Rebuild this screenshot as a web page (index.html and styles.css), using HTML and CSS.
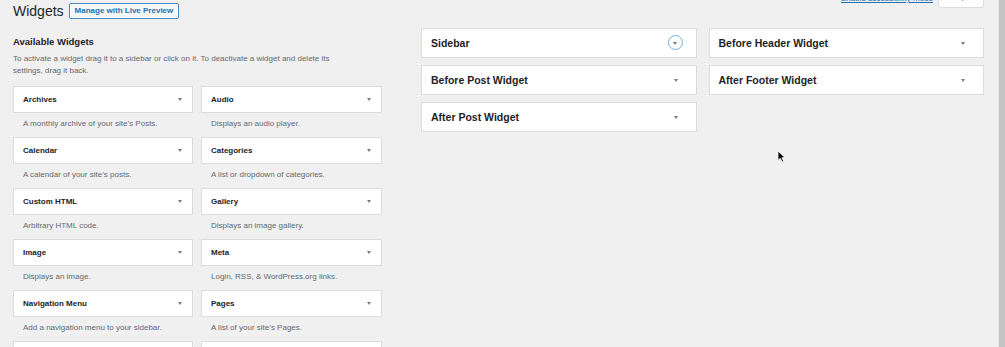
FILE: index.html
```html
<!DOCTYPE html>
<html lang="en">
<head>
    <meta charset="UTF-8" />
    <title>Widgets</title>
    <link rel="stylesheet" href="styles.css">
</head>
<body>

<div class="page">
    <div class="main">
        <div class="top">
            <div class="title-row">
                <h1>Widgets</h1>
                <a class="live-preview" href="#">Manage with Live Preview</a>
            </div>
            <div class="screen-meta">
                <a class="a11y-link" href="#">Enable accessibility mode</a>
                <button class="help-btn">Help ▾</button>
            </div>
        </div>

        <div class="columns">
            <div class="available">
                <h2>Available Widgets</h2>
                <p class="intro">To activate a widget drag it to a sidebar or click on it. To deactivate a widget and delete its settings, drag it back.</p>

                <div class="widget-list">
                    <div class="widget-item">
                        <div class="widget-top"><span>Archives</span><i class="arrow"></i></div>
                        <div class="widget-desc">A monthly archive of your site’s Posts.</div>
                    </div>
                    <div class="widget-item">
                        <div class="widget-top"><span>Audio</span><i class="arrow"></i></div>
                        <div class="widget-desc">Displays an audio player.</div>
                    </div>
                    <div class="widget-item">
                        <div class="widget-top"><span>Calendar</span><i class="arrow"></i></div>
                        <div class="widget-desc">A calendar of your site’s posts.</div>
                    </div>
                    <div class="widget-item">
                        <div class="widget-top"><span>Categories</span><i class="arrow"></i></div>
                        <div class="widget-desc">A list or dropdown of categories.</div>
                    </div>
                    <div class="widget-item">
                        <div class="widget-top"><span>Custom HTML</span><i class="arrow"></i></div>
                        <div class="widget-desc">Arbitrary HTML code.</div>
                    </div>
                    <div class="widget-item">
                        <div class="widget-top"><span>Gallery</span><i class="arrow"></i></div>
                        <div class="widget-desc">Displays an image gallery.</div>
                    </div>
                    <div class="widget-item">
                        <div class="widget-top"><span>Image</span><i class="arrow"></i></div>
                        <div class="widget-desc">Displays an image.</div>
                    </div>
                    <div class="widget-item">
                        <div class="widget-top"><span>Meta</span><i class="arrow"></i></div>
                        <div class="widget-desc">Login, RSS, &amp; WordPress.org links.</div>
                    </div>
                    <div class="widget-item">
                        <div class="widget-top"><span>Navigation Menu</span><i class="arrow"></i></div>
                        <div class="widget-desc">Add a navigation menu to your sidebar.</div>
                    </div>
                    <div class="widget-item">
                        <div class="widget-top"><span>Pages</span><i class="arrow"></i></div>
                        <div class="widget-desc">A list of your site’s Pages.</div>
                    </div>
                    <div class="widget-item">
                        <div class="widget-top empty"></div>
                    </div>
                    <div class="widget-item">
                        <div class="widget-top empty"></div>
                    </div>
                </div>
            </div>

            <div class="sidebars">
                <div class="sidebar-box"><span>Sidebar</span><i class="arrow focus"></i></div>
                <div class="sidebar-box"><span>Before Header Widget</span><i class="arrow"></i></div>
                <div class="sidebar-box"><span>Before Post Widget</span><i class="arrow"></i></div>
                <div class="sidebar-box"><span>After Footer Widget</span><i class="arrow"></i></div>
                <div class="sidebar-box"><span>After Post Widget</span><i class="arrow"></i></div>
            </div>
        </div>
    </div>

    <div class="scrollbar"></div>

    <!-- mouse pointer -->
    <svg class="cursor" width="9" height="13" viewBox="0 0 9 13">
        <path d="M1 1 L1 10.5 L3.3 8.3 L5 12 L6.6 11.3 L4.9 7.7 L8 7.7 Z" fill="#000" stroke="#fff" stroke-width="0.8"/>
    </svg>
</div>

</body>
</html>
```

FILE: styles.css
```css
body {
    margin: 0;
    font-family: 'Liberation Sans', Arial, sans-serif;
    background: #f0f0f1;
    color: #1d2327;
    overflow: hidden;
}

.page {
    position: relative;
    display: flex;
    height: 347px;
    overflow: hidden;
}

.main {
    flex: 1;
    padding: 0 14px 0 13px;
}

.top {
    display: flex;
    justify-content: space-between;
    align-items: flex-start;
    height: 22px;
}

.title-row {
    display: flex;
    align-items: center;
    height: 22px;
}

h1 {
    margin: 0;
    font-size: 14px;
    font-weight: 400;
    line-height: 22px;
}

.live-preview {
    margin-left: 5px;
    padding: 0 5px;
    height: 14px;
    line-height: 14px;
    font-size: 8px;
    font-weight: bold;
    color: #2271b1;
    text-decoration: none;
    border: 1px solid #4a8bc6;
    border-radius: 2px;
    background: #f6f7f7;
}

.screen-meta {
    display: flex;
    align-items: flex-end;
    margin-top: -14px;
}

.a11y-link {
    font-size: 8px;
    line-height: 10px;
    color: #2271b1;
    margin-right: 5px;
    margin-bottom: 4px;
}

.help-btn {
    width: 46px;
    height: 22px;
    padding: 0 0 2px;
    font-family: inherit;
    font-size: 8px;
    color: #646970;
    background: #fff;
    border: 1px solid #dcdcde;
    border-radius: 0 0 3px 3px;
}

.columns {
    display: flex;
    gap: 39px;
}

.available {
    width: 369px;
}

h2 {
    margin: 14px 0 0;
    font-size: 9.5px;
    line-height: 12px;
    font-weight: bold;
}

.intro {
    margin: 5px 0 0;
    max-width: 340px;
    font-size: 8px;
    line-height: 12px;
    color: #646970;
}

.widget-list {
    display: grid;
    grid-template-columns: 180px 181px;
    column-gap: 8px;
    margin-top: 9px;
}

.widget-top {
    display: flex;
    align-items: center;
    justify-content: space-between;
    height: 25px;
    padding: 0 10px 0 9px;
    background: #fff;
    border: 1px solid #dcdcde;
    font-size: 8px;
    font-weight: bold;
}

.widget-desc {
    height: 12px;
    padding: 5px 10px 7px;
    font-size: 8px;
    line-height: 12px;
    color: #646970;
}

.arrow {
    display: inline-block;
    width: 0;
    height: 0;
    border-left: 2.5px solid transparent;
    border-right: 2.5px solid transparent;
    border-top: 3px solid #787c82;
}

.sidebars {
    flex: 1;
    display: grid;
    grid-template-columns: 1fr 1fr;
    gap: 7px 12px;
    margin-top: 6px;
    align-content: start;
}

.sidebar-box {
    display: flex;
    align-items: center;
    justify-content: space-between;
    height: 28px;
    padding: 0 17px 0 9px;
    background: #fff;
    border: 1px solid #dcdcde;
    font-size: 10.5px;
    font-weight: bold;
}

.sidebar-box .arrow {
    margin-right: 1px;
}

.sidebar-box .arrow.focus {
    position: relative;
    margin-right: 2px;
}

.sidebar-box .arrow.focus::after {
    content: '';
    position: absolute;
    left: -6.5px;
    top: -9.5px;
    width: 13px;
    height: 13px;
    border: 1px solid #72aee6;
    border-radius: 50%;
}

.scrollbar {
    width: 6px;
    background: #c4c4c4;
    border-left: 1px solid #e4e4e4;
}

.cursor {
    position: absolute;
    left: 777px;
    top: 150px;
}
```
